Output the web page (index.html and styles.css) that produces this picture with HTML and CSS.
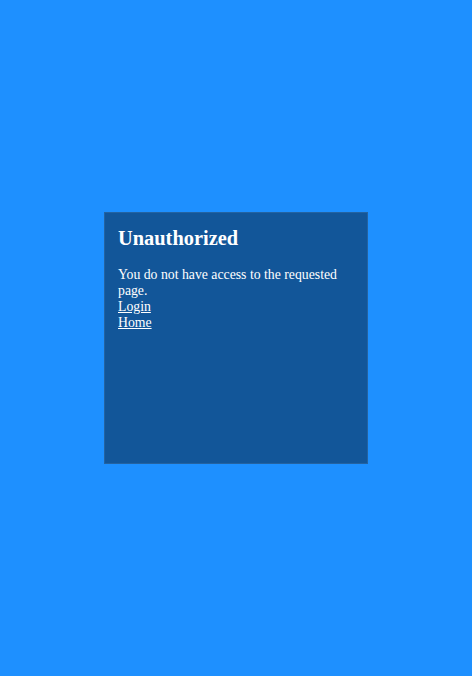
FILE: index.html
```html
<!DOCTYPE html>
<html>
<head>
<meta charset="utf-8">
<link rel="stylesheet" href="styles.css">
</head>
<body>
<div class="page">
  <div class="card">
    <h1 class="title">Unauthorized</h1>
    <p class="msg">You do not have access to the requested page.</p>
    <a class="link" href="#">Login</a>
    <a class="link" href="#">Home</a>
  </div>
</div>
</body>
</html>
```

FILE: styles.css
```css
html, body {
  margin: 0;
  padding: 0;
  height: 100%;
  background: #1e90ff;
}
.page {
  height: 100%;
  display: flex;
  align-items: center;
  justify-content: center;
  font-family: "Liberation Serif", serif;
  color: #fff;
}
.card {
  box-sizing: border-box;
  width: 264px;
  height: 252px;
  padding: 13px;
  background: rgba(0, 0, 0, 0.4);
  border: 1px solid rgba(255, 255, 255, 0.08);
  display: flex;
  flex-direction: column;
  align-items: flex-start;
  font-size: 13.75px;
  line-height: 16px;
}
.title {
  font-size: 20.4px;
  line-height: 24px;
  margin: 0 0 17px 0;
  font-weight: bold;
}
.msg {
  margin: 0;
}
.link {
  color: #fff;
}
```
